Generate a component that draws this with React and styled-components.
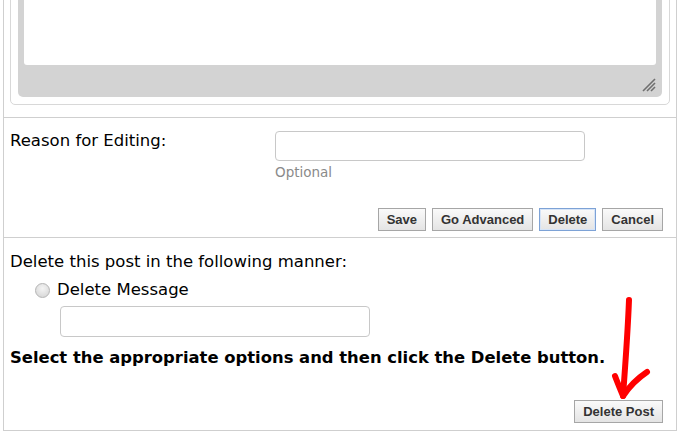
import React from "react";
import styled, { createGlobalStyle } from "styled-components";

const GlobalStyle = createGlobalStyle`
  body {
    margin: 0;
    background: #ffffff;
    font-family: "DejaVu Sans", Verdana, sans-serif;
    color: #000000;
    overflow: hidden;
  }
`;

const Panel = styled.div`
  width: 674px;
  margin: -40px 0 0 3px;
  border: 1px solid #cfcfcf;
  box-sizing: border-box;
`;

const Section = styled.div`
  padding: ${({ $pad }) => $pad};
  border-top: ${({ $first }) => ($first ? "none" : "1px solid #cfcfcf")};
`;

const Fieldset = styled.div`
  border: 1px solid #d8d8d8;
  border-radius: 5px;
  padding: 7px;
`;

const EditorFrame = styled.div`
  background: #d3d3d3;
  border-radius: 5px;
  padding: 6px 6px 5px 6px;
  display: flex;
  flex-direction: column;
`;

const TextArea = styled.div`
  height: 84px;
  background: #ffffff;
  border-radius: 0 0 3px 3px;
`;

const GripRow = styled.div`
  display: flex;
  justify-content: flex-end;
  padding-top: 12px;
`;

const ReasonGrid = styled.div`
  display: grid;
  grid-template-columns: 265px 310px;
  align-items: start;
`;

const Label = styled.div`
  font-size: 16.5px;
  line-height: 20px;
`;

const Field = styled.div`
  display: flex;
  flex-direction: column;
`;

const TextInput = styled.input`
  width: ${({ $w }) => $w}px;
  height: ${({ $h }) => $h}px;
  box-sizing: border-box;
  border: 1px solid #c8c8c8;
  border-radius: 4px;
  margin: ${({ $m }) => $m || "0"};
  padding: 0 6px;
  font-family: inherit;
  outline: none;
`;

const Hint = styled.div`
  color: #8a8a8a;
  font-size: 13.5px;
  line-height: 16px;
  margin-top: 3px;
`;

const ButtonRow = styled.div`
  display: flex;
  justify-content: flex-end;
  gap: 6px;
  margin-top: ${({ $mt }) => $mt}px;
`;

const Button = styled.button`
  height: 23px;
  padding: 0 8px;
  font-family: "Liberation Sans", Arial, sans-serif;
  font-weight: bold;
  font-size: 13px;
  color: #333333;
  background: linear-gradient(#fafafa, #e4e4e4);
  border: 1px solid ${({ $focus }) => ($focus ? "#7da2d6" : "#a6a6a6")};
  box-shadow: ${({ $focus }) => ($focus ? "inset 0 0 0 1px #d6e4f7" : "none")};
  cursor: pointer;
`;

const Prompt = styled.div`
  font-size: 16.5px;
  line-height: 20px;
`;

const RadioRow = styled.label`
  display: flex;
  align-items: center;
  gap: 7px;
  margin: 8px 0 0 25px;
  font-size: 16.5px;
  line-height: 20px;
`;

const Radio = styled.span`
  width: 15px;
  height: 15px;
  border-radius: 50%;
  box-sizing: border-box;
  border: 1px solid #b4b4b4;
  background: radial-gradient(circle at 50% 35%, #f4f4f4, #d2d2d2);
`;

const Notice = styled.div`
  font-size: 16.4px;
  font-weight: bold;
  line-height: 20px;
  margin-top: 11px;
`;

const FooterArea = styled.div`
  position: relative;
`;

const Arrow = styled.svg`
  position: absolute;
  right: 12px;
  bottom: 23px;
  overflow: visible;
`;

const ResizeGrip = () => (
  <svg width="15" height="15" viewBox="0 0 15 15">
    <g stroke="#6f6f6f" strokeWidth="1.6">
      <line x1="2" y1="14" x2="14" y2="2" />
      <line x1="6" y1="14" x2="14" y2="6" />
      <line x1="10" y1="14" x2="14" y2="10" />
    </g>
  </svg>
);

export default function App() {
  return (
    <>
      <GlobalStyle />
      <Panel>
        <Section $first $pad="6px 6px 12px 6px">
          <Fieldset>
            <EditorFrame>
              <TextArea />
              <GripRow>
                <ResizeGrip />
              </GripRow>
            </EditorFrame>
          </Fieldset>
        </Section>

        <Section $pad="13px 13px 6px 6px">
          <ReasonGrid>
            <Label>Reason for Editing:</Label>
            <Field>
              <TextInput $w={310} $h={30} />
              <Hint>Optional</Hint>
            </Field>
          </ReasonGrid>
          <ButtonRow $mt={28}>
            <Button>Save</Button>
            <Button>Go Advanced</Button>
            <Button $focus>Delete</Button>
            <Button>Cancel</Button>
          </ButtonRow>
        </Section>

        <Section $pad="14px 13px 7px 6px">
          <Prompt>Delete this post in the following manner:</Prompt>
          <RadioRow>
            <Radio />
            Delete Message
          </RadioRow>
          <TextInput $w={310} $h={31} $m="6px 0 0 50px" />
          <Notice>Select the appropriate options and then click the Delete button.</Notice>
          <FooterArea>
            <ButtonRow $mt={32}>
              <Button>Delete Post</Button>
            </ButtonRow>
            <Arrow width="40" height="104" viewBox="0 0 40 104">
              <g
                fill="none"
                stroke="#ff0000"
                strokeWidth="6"
                strokeLinecap="round"
                strokeLinejoin="round"
              >
                <path d="M18 4 C17 30 15 60 12 100" />
                <path d="M4 80 C7 88 10 95 12 100 C20 88 30 80 36 76" />
              </g>
            </Arrow>
          </FooterArea>
        </Section>
      </Panel>
    </>
  );
}
